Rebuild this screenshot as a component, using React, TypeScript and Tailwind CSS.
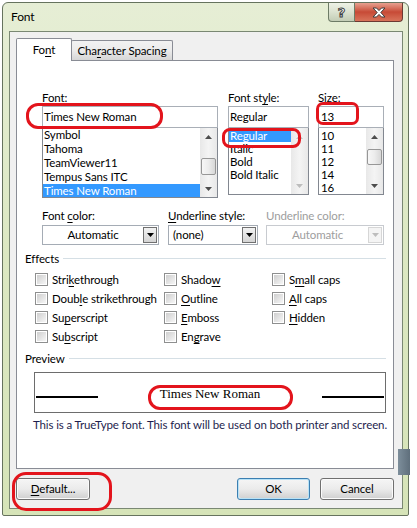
import React from "react";

const Tri = ({ dir = "down", color = "#000" }: { dir?: "up" | "down"; color?: string }) => (
  <svg width="7" height="4" viewBox="0 0 7 4" className="block">
    {dir === "down" ? <path d="M0 0H7L3.5 4Z" fill={color} /> : <path d="M0 4H7L3.5 0Z" fill={color} />}
  </svg>
);

function VScroll({ thumb, disabled }: { thumb?: string; disabled?: boolean }) {
  const c = disabled ? "#bdbdbd" : "#4d4d4d";
  return (
    <div className="w-[17px] shrink-0 flex flex-col bg-linear-to-r from-[#e8e8e8] via-[#f4f4f4] to-[#e8e8e8]">
      <div className="h-[17px] shrink-0 flex items-center justify-center">
        <Tri dir="up" color={c} />
      </div>
      <div className="flex-1 px-[1px]">
        {!disabled && (
          <div className={`${thumb} rounded-[2px] border border-[#979797] bg-linear-to-r from-[#f7f7f7] via-[#ececec] to-[#d7d7d7]`} />
        )}
      </div>
      <div className="h-[17px] shrink-0 flex items-center justify-center">
        <Tri dir="down" color={c} />
      </div>
    </div>
  );
}

function Check({ children }: { children: React.ReactNode }) {
  return (
    <div className="flex items-center h-[19px]">
      <div className="w-[13px] h-[13px] border border-[#8e8f8f] bg-white p-[1px] shrink-0">
        <div className="w-full h-full bg-linear-to-br from-[#cfcfcf] to-[#f6f6f6]" />
      </div>
      <span className="ml-[4px] whitespace-nowrap">{children}</span>
    </div>
  );
}

const U = ({ children }: { children: React.ReactNode }) => <span className="underline underline-offset-[2px]">{children}</span>;

function Drop({ w, text, center, disabled }: { w: string; text: string; center?: boolean; disabled?: boolean }) {
  return (
    <div className={`${w} h-[20px] flex items-center border ${disabled ? "border-[#c8cbd0] text-[#9d9d9d]" : "border-[#a5acb5] text-black"} bg-white pr-[1px]`}>
      <div className={`flex-1 ${center ? "text-center" : "pl-[4px]"} leading-[16px] whitespace-nowrap`}>{text}</div>
      <div
        className={`w-[14px] h-[16px] flex items-center justify-center border ${
          disabled ? "border-[#d6d6d6] bg-[#f4f4f4]" : "border-[#707070] bg-linear-to-b from-[#f2f2f2] to-[#d4d4d4]"
        }`}
      >
        <Tri color={disabled ? "#bdbdbd" : "#000"} />
      </div>
    </div>
  );
}

function Btn({ children, w, primary }: { children: React.ReactNode; w: string; primary?: boolean }) {
  return (
    <div
      className={`${w} h-[22px] rounded-[3px] border ${
        primary ? "border-[#3c7fb1] shadow-[inset_0_0_0_1px_#b7e2f7]" : "border-[#707070] shadow-[inset_0_0_0_1px_#fbfbfb]"
      } flex items-center justify-center p-[1px]`}
    >
      <div className="w-full h-full rounded-[2px] bg-linear-to-b from-[#f4f4f4] via-[#ebebeb] via-50% to-[#d2d2d2] flex items-center justify-center whitespace-nowrap">
        {children}
      </div>
    </div>
  );
}

const Red = ({ c }: { c: string }) => <div className={`absolute border-[3px] border-[#e3141c] ${c}`} />;

export default function App() {
  return (
    <div className="w-[417px] h-[528px] bg-white relative overflow-hidden font-['Lato','Segoe_UI',sans-serif] text-[11.5px] tracking-[-0.12px] text-black">
      {/* window */}
      <div className="ml-[2px] mt-[2px] w-[407px] h-[514px] border border-[#66735e] rounded-t-[6px] rounded-b-[2px] bg-linear-to-b from-[#e6eed5] via-[#dce8c2] to-[#d6e4b8] flex flex-col">
        {/* title bar */}
        <div className="h-[28px] shrink-0 flex items-start">
          <div className="pl-[8px] h-full flex items-center text-[12px]">Font</div>
          <div className="flex-1" />
          <div className="flex mr-[5px]">
            <div className="w-[27px] h-[19px] border border-t-0 border-[#6d7b66] rounded-bl-[4px] bg-linear-to-b from-[#eef2e6] via-[#dbe2d0] to-[#c3cdb6] flex items-center justify-center">
              <span className="font-['DejaVu_Sans',sans-serif] font-bold text-[13px] leading-none text-white [-webkit-text-stroke:1px_#3d3d3d]">?</span>
            </div>
            <div className="w-[48px] h-[19px] border border-t-0 border-l-0 border-[#6b3a33] rounded-br-[4px] bg-linear-to-b from-[#e6a090] via-[#c74a36] via-50% to-[#d8735a] flex items-center justify-center">
              <svg width="14" height="11" viewBox="0 0 14 11">
                <path
                  d="M1 1H4.5L7 3.6L9.5 1H13L8.8 5.5L13 10H9.5L7 7.4L4.5 10H1L5.2 5.5Z"
                  fill="#fff"
                  stroke="#3d3d3d"
                  strokeWidth="1"
                  strokeLinejoin="round"
                />
              </svg>
            </div>
          </div>
        </div>
        {/* client */}
        <div className="ml-[6px] mr-[5px] h-[478px] border border-[#7a8873] bg-[#f0f0f0] pt-[6px] pl-[6px] flex flex-col">
          {/* tabs */}
          <div className="flex items-end h-[22px]">
            <div className="relative z-10 w-[56px] h-[23px] -mb-[1px] bg-white border border-b-0 border-[#898c95] flex items-center justify-center rounded-t-[2px]">
              <span>
                Fo<U>n</U>t
              </span>
            </div>
            <div className="w-[102px] h-[20px] -ml-[1px] border border-b-0 border-[#898c95] bg-linear-to-b from-[#f2f2f2] via-[#ebebeb] via-50% to-[#d6d6d6] flex items-center justify-center rounded-t-[2px] whitespace-nowrap">
              <span>
                Cha<U>r</U>acter Spacing
              </span>
            </div>
          </div>
          {/* panel */}
          <div className="w-[378px] h-[409px] border border-[#898c95] bg-white flex flex-col">
            {/* row 1 */}
            <div className="flex items-start pl-[25px] pt-[29px]">
              <div className="w-[176px]">
                <div className="h-[15px] leading-[15px] mb-[1px]">
                  <U>F</U>ont:
                </div>
                <div className="h-[22px] border border-[#a9afb7] pl-[1px] leading-[20px]">Times New Roman</div>
                <div className="h-[70px] border border-t-0 border-[#828790] flex">
                  <div className="flex-1 overflow-hidden">
                    {["Symbol", "Tahoma", "TeamViewer11", "Tempus Sans ITC"].map((f) => (
                      <div key={f} className="h-[14px] leading-[14px] pl-[1px]">
                        {f}
                      </div>
                    ))}
                    <div className="h-[14px] leading-[14px] pl-[1px] bg-[#3399ff] text-white">Times New Roman</div>
                  </div>
                  <VScroll thumb="mt-[13px] h-[17px]" />
                </div>
              </div>
              <div className="w-[81px] ml-[10px]">
                <div className="h-[15px] leading-[15px] mb-[1px]">
                  Font st<U>y</U>le:
                </div>
                <div className="h-[22px] border border-[#a9afb7] pl-[1px] leading-[20px]">Regular</div>
                <div className="h-[67px] border border-t-0 border-[#828790] flex">
                  <div className="flex-1 overflow-hidden pt-[1px]">
                    <div className="h-[13px] leading-[13px] pl-[1px] bg-[#3399ff] text-white">Regular</div>
                    {["Italic", "Bold", "Bold Italic"].map((f) => (
                      <div key={f} className="h-[13px] leading-[13px] pl-[1px]">
                        {f}
                      </div>
                    ))}
                  </div>
                  <VScroll disabled />
                </div>
              </div>
              <div className="w-[66px] ml-[9px]">
                <div className="h-[15px] leading-[15px] mb-[1px]">
                  <U>S</U>ize:
                </div>
                <div className="h-[22px] border border-[#a9afb7] pl-[2px] leading-[20px]">13</div>
                <div className="h-[67px] border border-t-0 border-[#828790] flex">
                  <div className="flex-1 overflow-hidden pt-[1px]">
                    {["10", "11", "12", "14", "16"].map((f) => (
                      <div key={f} className="h-[13px] leading-[13px] pl-[2px]">
                        {f}
                      </div>
                    ))}
                  </div>
                  <VScroll thumb="mt-[4px] h-[16px]" />
                </div>
              </div>
            </div>
            {/* row 2 */}
            <div className="flex items-start pl-[25px] mt-[10px]">
              <div className="w-[117px]">
                <div className="h-[15px] leading-[15px] mb-[2px]">
                  Font <U>c</U>olor:
                </div>
                <Drop w="w-[117px]" text="Automatic" center />
              </div>
              <div className="w-[90px] ml-[9px]">
                <div className="h-[15px] leading-[15px] mb-[2px] whitespace-nowrap">
                  <U>U</U>nderline style:
                </div>
                <Drop w="w-[90px]" text="(none)" />
              </div>
              <div className="w-[118px] ml-[8px]">
                <div className="h-[15px] leading-[15px] mb-[2px] text-[#9d9d9d] whitespace-nowrap">Underline color:</div>
                <Drop w="w-[118px]" text="Automatic" center disabled />
              </div>
            </div>
            {/* effects */}
            <div className="flex items-center pl-[8px] pr-[7px] mt-[6px] h-[15px]">
              <span>Effects</span>
              <div className="flex-1 h-px bg-[#d5dfe5] ml-[4px]" />
            </div>
            <div className="flex pl-[18px] mt-[4px]">
              <div className="w-[129px]">
                <Check>
                  Stri<U>k</U>ethrough
                </Check>
                <Check>
                  Doub<U>l</U>e strikethrough
                </Check>
                <Check>
                  Su<U>p</U>erscript
                </Check>
                <Check>
                  Su<U>b</U>script
                </Check>
              </div>
              <div className="w-[108px]">
                <Check>
                  Shado<U>w</U>
                </Check>
                <Check>
                  <U>O</U>utline
                </Check>
                <Check>
                  <U>E</U>mboss
                </Check>
                <Check>
                  En<U>g</U>rave
                </Check>
              </div>
              <div>
                <Check>
                  S<U>m</U>all caps
                </Check>
                <Check>
                  <U>A</U>ll caps
                </Check>
                <Check>
                  <U>H</U>idden
                </Check>
              </div>
            </div>
            {/* preview */}
            <div className="flex items-center pl-[8px] pr-[7px] mt-[5px] h-[15px]">
              <span>Preview</span>
              <div className="flex-1 h-px bg-[#d5dfe5] ml-[4px]" />
            </div>
            <div className="ml-[17px] mt-[6px] w-[352px] h-[41px] border border-[#6d6d6d] flex items-start px-[1px]">
              <div className="w-[62px] h-[2px] bg-black mt-[23px]" />
              <div className="flex-1 text-center font-['Liberation_Serif','Times_New_Roman',serif] text-[13px] tracking-normal leading-[15px] mt-[13px] whitespace-nowrap">
                Times New Roman
              </div>
              <div className="w-[62px] h-[2px] bg-black mt-[23px]" />
            </div>
            <div className="ml-[16px] mt-[4px] h-[15px] leading-[15px] text-[#1e1e4e] whitespace-nowrap">
              This is a TrueType font. This font will be used on both printer and screen.
            </div>
          </div>
          {/* buttons */}
          <div className="flex mt-[9px] w-[378px]">
            <Btn w="w-[74px]">
              <span>
                <U>D</U>efault...
              </span>
            </Btn>
            <div className="flex-1" />
            <Btn w="w-[73px]" primary>
              OK
            </Btn>
            <div className="w-[10px]" />
            <Btn w="w-[74px]">Cancel</Btn>
          </div>
        </div>
      </div>

      {/* artifact at right edge */}
      <div className="absolute left-[398px] top-[449px] w-[12px] h-[26px] bg-linear-to-r from-[#7d8e9b] to-[#5f6f7c]" />

      {/* red annotations */}
      <Red c="left-[26px] top-[103px] w-[137px] h-[26px] rounded-[12px]" />
      <Red c="left-[222px] top-[128px] w-[79px] h-[20px] rounded-[8px]" />
      <Red c="left-[316px] top-[102px] w-[43px] h-[23px] rounded-[7px]" />
      <Red c="left-[148px] top-[385px] w-[145px] h-[25px] rounded-[12px]" />
      <Red c="left-[12px] top-[472px] w-[100px] h-[39px] rounded-[14px]" />
    </div>
  );
}
